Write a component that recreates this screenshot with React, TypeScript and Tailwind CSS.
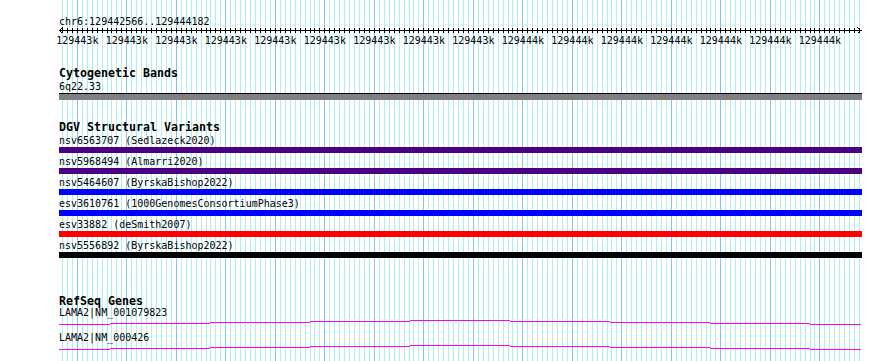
import React from "react";

const START = 129442566;
const END = 129444182;
const LEFT = 59; // page x where the track column begins
const SCALE = 800 / (END - START);

// page x of a base position, made local to the column
const bpX = (bp: number) => 60 + (bp - START) * SCALE - LEFT;

const MONO = "font-['DejaVu_Sans_Mono','Liberation_Mono',monospace]";

const minors: number[] = [];
for (let bp = 129442570; bp <= END; bp += 10) minors.push(bp);
const majors: number[] = [];
for (let bp = 129442600; bp <= END; bp += 100) majors.push(bp);

const variants = [
    { label: "nsv6563707 (Sedlazeck2020)", color: "bg-[#4b0082]" },
    { label: "nsv5968494 (Almarri2020)", color: "bg-[#4b0082]" },
    { label: "nsv5464607 (ByrskaBishop2022)", color: "bg-[#0000ff]" },
    { label: "esv3610761 (1000GenomesConsortiumPhase3)", color: "bg-[#0000ff]" },
    { label: "esv33882 (deSmith2007)", color: "bg-[#ff0000]" },
    { label: "nsv5556892 (ByrskaBishop2022)", color: "bg-black w-[802px]" },
];

const genes = ["LAMA2|NM_001079823", "LAMA2|NM_000426"];

// stair-stepped transcript line, as the reference draws it
const geneSteps = [
    { x0: 59, x1: 110, y: 5 },
    { x0: 110, x1: 210, y: 4 },
    { x0: 210, x1: 310, y: 3 },
    { x0: 310, x1: 410, y: 2 },
    { x0: 410, x1: 510, y: 1 },
    { x0: 510, x1: 610, y: 2 },
    { x0: 610, x1: 710, y: 3 },
    { x0: 710, x1: 810, y: 4 },
    { x0: 810, x1: 861, y: 5 },
];

function Grid() {
    return (
        <svg className="absolute inset-0" width={803} height={361} shapeRendering="crispEdges">
            {minors.map((bp) => (
                <rect key={bp} x={Math.round(bpX(bp))} y={0} width={1} height={361} fill="#afeeee" />
            ))}
            {majors.map((bp) => (
                <rect key={bp} x={Math.round(bpX(bp))} y={0} width={1} height={361} fill="#87c3ee" />
            ))}
        </svg>
    );
}

function Ruler() {
    return (
        <svg className="block overflow-visible" width={803} height={20} overflow="visible" shapeRendering="crispEdges">
            <rect x={0} y={2} width={803} height={1} fill="#000" />
            {minors.map((bp) => (
                <rect key={bp} x={Math.round(bpX(bp))} y={0} width={1} height={5} fill="#000" />
            ))}
            <path d="M0.5 2.5 L3.5 -0.5 M0.5 2.5 L3.5 5.5" stroke="#000" fill="none" />
            <path d="M801.5 2.5 L798.5 -0.5 M801.5 2.5 L798.5 5.5" stroke="#000" fill="none" />
            {majors.map((bp) => (
                <text
                    key={bp}
                    x={bpX(bp) + 0.5}
                    y={16}
                    textAnchor="middle"
                    fontFamily="'DejaVu Sans Mono', monospace"
                    fontSize={10}
                    fill="#000"
                >
                    {Math.round(bp / 1000)}k
                </text>
            ))}
        </svg>
    );
}

function Title({ children, className = "" }: { children: React.ReactNode; className?: string }) {
    return <div className={`h-[13px] leading-[13px] text-[11.63px] font-bold ${className}`}>{children}</div>;
}

function Label({ children }: { children: React.ReactNode }) {
    return <div className="h-[13px] leading-[13px] text-[10px] whitespace-nowrap">{children}</div>;
}

export default function App() {
    return (
        <div className={`w-[890px] h-[361px] bg-white text-black overflow-hidden flex ${MONO}`}>
            <div className="w-[59px] shrink-0" />
            <div className="relative w-[803px] h-[361px] shrink-0">
                <Grid />
                <div className="relative flex flex-col">
                    <div className="mt-[15px]">
                        <Label>chr6:129442566..129444182</Label>
                    </div>
                    <Ruler />

                    <Title className="mt-[19px]">Cytogenetic Bands</Title>
                    <Label>6q22.33</Label>
                    <div className="h-[7px] border-t border-black bg-[#808080]" />

                    <Title className="mt-[21px]">DGV Structural Variants</Title>
                    {variants.map((v) => (
                        <div key={v.label} className="h-[21px] flex flex-col">
                            <Label>{v.label}</Label>
                            <div className={`h-[6px] w-[803px] ${v.color}`} />
                        </div>
                    ))}

                    <Title className="mt-[35px]">RefSeq Genes</Title>
                    {genes.map((g) => (
                        <div key={g} className="h-[25px] flex flex-col -mt-[2px] mb-[2px]">
                            <Label>{g}</Label>
                            <svg className="block" width={803} height={12} shapeRendering="crispEdges">
                                {geneSteps.map((s) => (
                                    <rect
                                        key={s.x0}
                                        x={s.x0 - LEFT}
                                        y={s.y}
                                        width={s.x1 - s.x0}
                                        height={1}
                                        fill="#ff00ff"
                                    />
                                ))}
                            </svg>
                        </div>
                    ))}
                </div>
            </div>
        </div>
    );
}
